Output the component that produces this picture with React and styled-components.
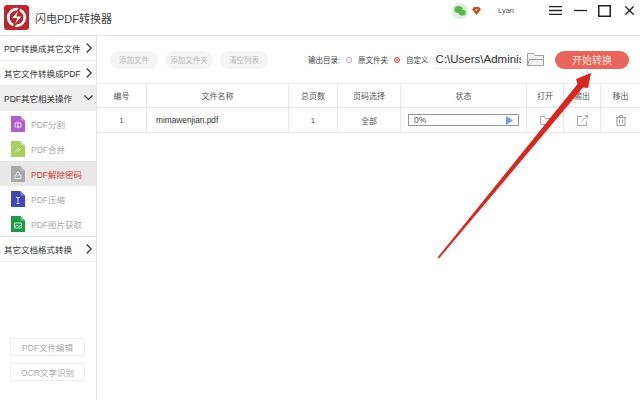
import React from 'react';
import styled, { createGlobalStyle } from 'styled-components';

const Global = createGlobalStyle`
    html, body { margin: 0; padding: 0; background: #fff; }
    body { font-family: "Liberation Sans", "Noto Sans CJK SC", sans-serif; }
    * { box-sizing: border-box; }
`;

const menuTop = ['PDF转换成其它文件', '其它文件转换成PDF'];
const subItems = [
    { name: 'PDF分割', color: '#b25bd0', mark: 'M4 7h6v4H4zM7 5.500v7' },
    { name: 'PDF合并', color: '#a8cf5c', mark: 'M4.500 10.500l3-3.500M6.500 11l3-3.500' },
    { name: 'PDF解除密码', color: '#a9a9a9', mark: 'M4 9h6v3.500H4zM5.500 9V7.500a1.500 1.500 0 0 1 3 0V9', active: true },
    { name: 'PDF压缩', color: '#4146b8', mark: 'M5 6.500h4M7 6.500v6M5.500 12.500h3' },
    { name: 'PDF图片获取', color: '#1c9a43', mark: 'M3.500 7h7v5h-7zM3.500 11l2.500-2 2 1.500 2.500-2' },
];
const columns = [
    { label: '编号', value: '1' },
    { label: '文件名称', value: 'mimawenjian.pdf', left: true },
    { label: '总页数', value: '1' },
    { label: '页码选择', value: '全部' },
];

const Chevron = ({ down }) => (
    down ? (
        <svg width="9" height="6" viewBox="0 0 9 6" fill="none" stroke="#333" strokeWidth="1.200">
            <path d="M.5.500l4 4 4-4" />
        </svg>
    ) : (
        <svg width="6" height="10" viewBox="0 0 6 10" fill="none" stroke="#333" strokeWidth="1.200">
            <path d="M.7.500l4.500 4.500-4.500 4.500" />
        </svg>
    )
);

const DocIcon = ({ color, mark }) => (
    <svg width="14" height="16" viewBox="0 0 14 16">
        <path d="M0 0h9.500L14 4.500V16H0z" fill={color} />
        <path d="M9.500 0L14 4.500H9.500z" fill="#fff" fillOpacity=".35" />
        <path d={mark} fill="none" stroke="#fff" strokeOpacity=".85" strokeWidth=".9" />
    </svg>
);

function App() {
    return (
        <Page>
            <Global />
            <Header>
                <Logo>
                    <svg width="25" height="25" viewBox="0 0 25 25">
                        <rect width="25" height="25" rx="3" fill="#b8282c" />
                        <circle cx="12.500" cy="12.500" r="8.300" fill="none" stroke="#fff" strokeWidth="2.800" />
                        <path d="M16 2.500L7 13.500h5.500L9 22.500l9.500-11.500H13z" fill="#fff" stroke="#b8282c" strokeWidth="1.200" />
                    </svg>
                </Logo>
                <Title>闪电PDF转换器</Title>
                <TopTools>
                    <svg width="16" height="16" viewBox="0 0 16 16">
                        <circle cx="8" cy="8" r="8" fill="#dfeedd" />
                        <ellipse cx="6.500" cy="6.500" rx="4.200" ry="3.500" fill="#56b948" />
                        <ellipse cx="10.300" cy="9.700" rx="3.400" ry="2.900" fill="#56b948" />
                    </svg>
                    <Gem>
                        <svg width="9" height="8" viewBox="0 0 9 8">
                            <path d="M2 0h5l2 2.600L4.500 8 0 2.600z" fill="#b8572a" />
                            <path d="M3 2.200h3L4.500 4.500z" fill="#f3c79c" />
                        </svg>
                    </Gem>
                    <UserName>Lyan</UserName>
                    <WindowIcons>
                        <svg width="13" height="9" viewBox="0 0 13 9" stroke="#222" strokeWidth="1.300">
                            <path d="M0 .7h13M0 4.500h13M0 8.300h13" />
                        </svg>
                        <svg width="13" height="9" viewBox="0 0 13 9" stroke="#222" strokeWidth="1.300">
                            <path d="M0 4.500h13" />
                        </svg>
                        <svg width="13" height="12" viewBox="0 0 13 12" fill="none" stroke="#222" strokeWidth="1.500">
                            <rect x=".75" y=".75" width="11.500" height="10.500" />
                        </svg>
                        <svg width="9" height="9" viewBox="0 0 9 9" stroke="#222" strokeWidth="1.300">
                            <path d="M.4.4l8.200 8.200M8.600.4L.4 8.600" />
                        </svg>
                    </WindowIcons>
                </TopTools>
            </Header>
            <Body>
                <Sidebar>
                    {menuTop.map((label) => (
                        <MenuRow key={label}>
                            {label}
                            <Chevron />
                        </MenuRow>
                    ))}
                    <MenuRow $open>
                        PDF其它相关操作
                        <Chevron down />
                    </MenuRow>
                    {subItems.map((item) => (
                        <SubRow key={item.name} $active={item.active}>
                            <DocIcon color={item.color} mark={item.mark} />
                            {item.name}
                        </SubRow>
                    ))}
                    <MenuRow $topLine>
                        其它文档格式转换
                        <Chevron />
                    </MenuRow>
                    <SideButtons>
                        <SideButton>PDF文件编辑</SideButton>
                        <SideButton>OCR文字识别</SideButton>
                    </SideButtons>
                </Sidebar>
                <Main>
                    <Toolbar>
                        <PillGroup>
                            <Pill>添加文件</Pill>
                            <Pill>添加文件夹</Pill>
                            <Pill>清空列表</Pill>
                        </PillGroup>
                        <OutputGroup>
                            <OutputLabel>输出目录:</OutputLabel>
                            <Radio />
                            <OutputLabel>原文件夹</OutputLabel>
                            <Radio $checked />
                            <OutputLabel>自定义</OutputLabel>
                        </OutputGroup>
                        <PathBox>C:\Users\Adminis</PathBox>
                        <FolderButton>
                            <svg width="17" height="13" viewBox="0 0 17 13" fill="none" stroke="#a0a0a0">
                                <path d="M.5 12.500V.5h6l1.500 2h8.500v10z" fill="#f2f2f2" />
                                <path d="M.5 12.500l2-6h14" />
                            </svg>
                        </FolderButton>
                        <StartButton>开始转换</StartButton>
                    </Toolbar>
                    <Table>
                        <TableRow $head>
                            {columns.map((col) => <Cell key={col.label}>{col.label}</Cell>)}
                            <Cell>状态</Cell>
                            <Cell>打开</Cell>
                            <Cell>输出</Cell>
                            <Cell>移出</Cell>
                        </TableRow>
                        <TableRow>
                            {columns.map((col) => (
                                <Cell key={col.label} $left={col.left}>{col.value}</Cell>
                            ))}
                            <Cell>
                                <Progress>
                                    0%
                                    <svg width="7" height="9" viewBox="0 0 7 9"><path d="M0 0l7 4.500L0 9z" fill="#6d9eee" /></svg>
                                </Progress>
                            </Cell>
                            <Cell>
                                <svg width="11" height="9" viewBox="0 0 11 9" fill="none" stroke="#aaa">
                                    <path d="M.5 8.500V.5h4l1 2h5v6z" />
                                </svg>
                            </Cell>
                            <Cell>
                                <svg width="11" height="11" viewBox="0 0 11 11" fill="none" stroke="#aaa">
                                    <path d="M5.500 1.500h-5v9h9V5.500M4.500 6.500l6-6M7.500.5h3v3" />
                                </svg>
                            </Cell>
                            <Cell>
                                <svg width="10" height="11" viewBox="0 0 10 11" fill="none" stroke="#999">
                                    <path d="M0 2.500h10M3.500 2.500v-2h3v2M1 2.500v8h8v-8M3.500 4.500v4M6.500 4.500v4" />
                                </svg>
                            </Cell>
                        </TableRow>
                    </Table>
                </Main>
            </Body>
            <Arrow width="640" height="400" viewBox="0 0 640 400">
                <path d="M437.500 257.500L577.500 84L576 79L591 73L588 88L583 87.500L439 258.500z" fill="#d8281e" />
            </Arrow>
        </Page>
    );
}
export default App;

const Page = styled.div`
    position: relative;
    width: 640px;
    height: 400px;
    overflow: hidden;
    display: flex;
    flex-direction: column;
    background: #fff;
`;

const Header = styled.div`
    height: 36px;
    display: flex;
    align-items: center;
    padding: 0 6px 0 4px;
    border-bottom: 1px solid #e4e4e4;
`;

const Logo = styled.div`
    width: 25px;
    height: 25px;
    margin-right: 6px;
    line-height: 0;
`;

const Title = styled.div`
    font-size: 11px;
    color: #444;
    white-space: nowrap;
`;

const TopTools = styled.div`
    display: flex;
    align-items: center;
    margin-left: auto;
    padding-bottom: 14px;
`;

const Gem = styled.div`
    margin-left: 4px;
    line-height: 0;
`;

const UserName = styled.div`
    width: 15px;
    margin-left: 17px;
    font-size: 7.500px;
    color: #555;
`;

const WindowIcons = styled.div`
    display: flex;
    align-items: center;
    gap: 12px;
    margin-left: 36px;

    svg:nth-child(3) {
        margin-left: -1px;
    }
    svg:last-child {
        margin-left: 2px;
    }
`;

const Body = styled.div`
    flex: 1;
    display: flex;
    min-height: 0;
`;

const Sidebar = styled.div`
    width: 97px;
    display: flex;
    flex-direction: column;
    border-right: 1px solid #e6e6e6;
`;

const MenuRow = styled.div`
    height: ${(props) => (props.$topLine ? '26px' : '25px')};
    display: flex;
    align-items: center;
    justify-content: space-between;
    padding: 0 ${(props) => (props.$open ? '3px' : '4px')} 0 4px;
    font-size: 8.500px;
    color: #333;
    white-space: nowrap;
    background: ${(props) => (props.$open ? '#eeeeee' : '#fff')};
    border-bottom: 1px solid ${(props) => (props.$open ? '#eeeeee' : '#ececec')};
    border-top: ${(props) => (props.$topLine ? '1px solid #e2e2e2' : 'none')};
`;

const SubRow = styled.div`
    height: 25px;
    display: flex;
    align-items: center;
    gap: 6px;
    padding-left: 11px;
    font-size: 8.500px;
    color: ${(props) => (props.$active ? '#d33a32' : '#a8a8a8')};
    background: ${(props) => (props.$active ? '#e8e8e8' : '#fff')};
`;

const SideButtons = styled.div`
    margin-top: auto;
    padding: 0 0 19px 10px;
    display: flex;
    flex-direction: column;
    gap: 7px;
`;

const SideButton = styled.div`
    width: 75px;
    height: 18px;
    display: flex;
    align-items: center;
    justify-content: center;
    border: 1px solid #ececec;
    border-radius: 2px;
    font-size: 8.500px;
    color: #aaa;
`;

const Main = styled.div`
    flex: 1;
    min-width: 0;
    display: flex;
    flex-direction: column;
`;

const Toolbar = styled.div`
    height: 47px;
    display: flex;
    align-items: center;
    padding: 0 11px 0 13px;
`;

const PillGroup = styled.div`
    display: flex;
    gap: 7px;
`;

const Pill = styled.div`
    width: 48px;
    height: 18px;
    display: flex;
    align-items: center;
    justify-content: center;
    border-radius: 9px;
    background: #f4f4f4;
    font-size: 7.500px;
    color: #bbb;
    white-space: nowrap;
`;

const OutputGroup = styled.div`
    display: flex;
    align-items: center;
    gap: 6px;
    margin-left: 40px;
`;

const OutputLabel = styled.span`
    font-size: 7.500px;
    color: #444;
    white-space: nowrap;
`;

const Radio = styled.span`
    width: 6px;
    height: 6px;
    border-radius: 50%;
    border: 1px solid ${(props) => (props.$checked ? '#d9524a' : '#aaa')};
    background: ${(props) => (props.$checked ? '#d9524a' : '#fff')};
    box-shadow: ${(props) => (props.$checked ? 'inset 0 0 0 1px #fff' : 'none')};
`;

const PathBox = styled.div`
    width: 87px;
    height: 19px;
    margin-left: 5px;
    padding-left: 2px;
    overflow: hidden;
    font-size: 11.500px;
    line-height: 19px;
    color: #333;
    white-space: nowrap;
    border-bottom: 1px solid #eee;
    background: #fafafa;
`;

const FolderButton = styled.div`
    margin-left: 6px;
    line-height: 0;
`;

const StartButton = styled.div`
    width: 74px;
    height: 18px;
    margin-left: auto;
    display: flex;
    align-items: center;
    justify-content: center;
    border-radius: 9px;
    background: #e8655c;
    font-size: 10px;
    color: #fbe4d8;
`;

const Table = styled.div`
    display: flex;
    flex-direction: column;
    border-top: 1px solid #eaeaea;
`;

const TableRow = styled.div`
    display: grid;
    grid-template-columns: 50px 142px 49px 63px 126px 37px 37px 1fr;
    height: ${(props) => (props.$head ? '24px' : '25px')};
    border-bottom: 1px solid #e8e8e8;
`;

const Cell = styled.div`
    display: flex;
    align-items: center;
    justify-content: ${(props) => (props.$left ? 'flex-start' : 'center')};
    padding-left: ${(props) => (props.$left ? '9px' : '0')};
    font-size: ${(props) => (props.$left ? '8.300px' : '8px')};
    color: ${(props) => (props.$left ? '#333' : '#555')};
    white-space: nowrap;
    border-right: 1px solid #e8e8e8;

    &:last-child {
        border-right: none;
    }
`;

const Progress = styled.div`
    width: 111px;
    height: 12px;
    display: flex;
    align-items: center;
    justify-content: space-between;
    padding: 0 5px 0 5px;
    border: 1px solid #999;
    font-size: 8.500px;
    color: #555;
`;

const Arrow = styled.svg`
    position: absolute;
    left: 0;
    top: 0;
    pointer-events: none;
`;
